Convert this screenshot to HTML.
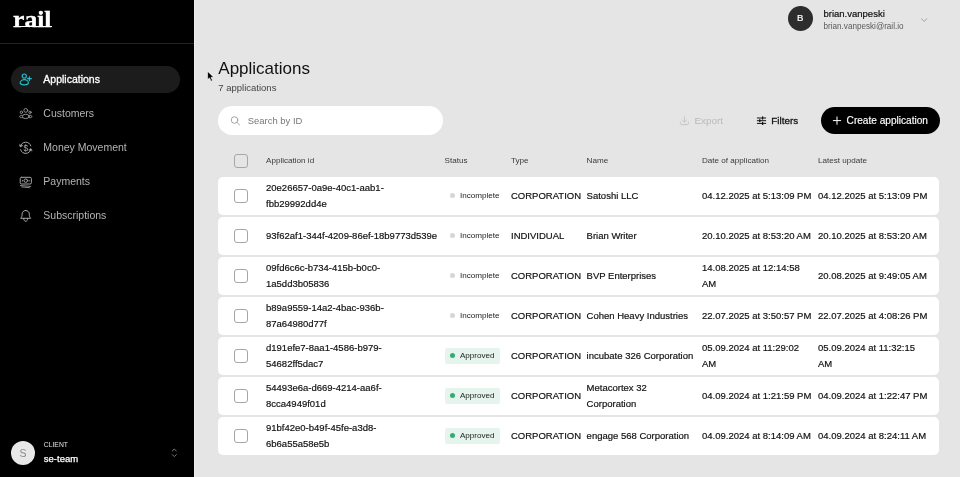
<!DOCTYPE html>
<html><head><meta charset="utf-8">
<style>
*{box-sizing:border-box;margin:0;padding:0}
html,body{width:960px;height:477px;overflow:hidden}
body{font-family:"Liberation Sans",sans-serif;background:#e6e5e5;color:#111;position:relative}
.side{position:absolute;left:0;top:0;width:194px;height:477px;background:#000}
.logo{position:absolute;left:13.3px;top:4.6px;font-family:"Liberation Serif",serif;font-weight:bold;font-size:24px;color:#fff;letter-spacing:0px;line-height:28px;transform:scaleX(1.07);transform-origin:0 0;-webkit-text-stroke:0.35px #fff}
.logo-u{position:absolute;left:13.6px;top:26px;width:38.5px;height:1.3px;background:#fff}
.sedge{position:absolute;left:194px;top:0;width:1px;height:477px;background:#eeeded}
.sdiv{position:absolute;left:0;top:43px;width:194px;height:1px;background:#232323}
.nav{position:absolute;left:11px;width:169px;height:26.6px;border-radius:13.3px;color:#b4b4b4;font-size:10.5px;line-height:26.6px;padding-left:32.3px;white-space:nowrap}
.nav.act{background:#1c1c1c;color:#fff;-webkit-text-stroke:0.3px #fff}
.cl-av{position:absolute;left:10.7px;top:440.7px;width:24.6px;height:24.6px;border-radius:50%;background:#e8e8e8;color:#8a8a8a;font-size:10.5px;line-height:24.6px;text-align:center}
.cl-l{position:absolute;left:43.8px;top:440px;font-size:6.8px;line-height:9px;color:#e0e0e0}
.cl-n{position:absolute;left:43.8px;top:452.5px;font-size:9.5px;line-height:12px;color:#fff;-webkit-text-stroke:0.25px #fff}
.u-av{position:absolute;left:787.8px;top:6.3px;width:24.8px;height:24.8px;border-radius:50%;background:#2d2d2d;color:#fff;font-size:9.6px;line-height:24.8px;text-align:center;-webkit-text-stroke:0.2px #fff}
.u-n{position:absolute;left:823.5px;top:8px;font-size:9.5px;line-height:12px;color:#111;-webkit-text-stroke:0.2px #111}
.u-e{position:absolute;left:823.5px;top:21.4px;font-size:8.15px;line-height:11px;color:#5a5a5a}
h1{position:absolute;left:218.3px;top:59px;font-size:17px;line-height:20px;font-weight:normal;color:#111}
.sub{position:absolute;left:218.3px;top:81.5px;font-size:9.5px;line-height:12px;color:#444}
.search{position:absolute;left:218px;top:106px;width:225.4px;height:28.5px;border-radius:14.25px;background:#fff;font-size:9.45px;color:#777;line-height:29.7px;padding-left:29.8px}
.btn{position:absolute;top:106.5px;height:27.5px;line-height:27.5px;font-size:9.9px;white-space:nowrap}
.create{left:820.6px;width:119px;border-radius:13.75px;background:#000;color:#fff;padding-left:26px;font-size:10.1px;-webkit-text-stroke:0.15px #fff}
.th{position:absolute;top:155px;font-size:8.1px;line-height:11px;color:#3a3a3a;white-space:nowrap}
.cb{position:absolute;left:233.5px;width:14.2px;height:14.4px;border:1px solid #a6a6a6;border-radius:3px;background:#fff}
.row{position:absolute;left:218px;width:721.4px;height:38.3px;background:#fff;border-radius:5px;font-size:9.5px;color:#111}
.row div{position:absolute}
.row .c{-webkit-text-stroke:0.18px #111;top:50%;transform:translateY(-50%);line-height:16.3px;font-size:9.5px;white-space:nowrap}
.bd{top:11px;height:15.8px;width:54.5px;border-radius:2px;font-size:8.1px;line-height:15.8px;padding-left:14.6px;color:#222;white-space:nowrap}
.bd i{position:absolute;left:4.7px;top:5.2px;width:5.4px;height:5.4px;border-radius:50%}
.bd.ap{background:#e5f5ee}.bd.ap i{background:#2fae70}
.bd.in i{background:#d6d6d6}
#wrap{position:absolute;left:0;top:0;width:960px;height:477px;will-change:transform;transform:translateZ(0)}
.ov{position:absolute;left:0;top:0;width:960px;height:477px;pointer-events:none}
</style></head><body>
<div id="wrap">
<div class="side">
<div class="logo">rail</div><div class="logo-u"></div>
<div class="sdiv"></div>
<div class="nav act" style="top:66px">Applications</div>
<div class="nav" style="top:100px">Customers</div>
<div class="nav" style="top:134px">Money Movement</div>
<div class="nav" style="top:168px">Payments</div>
<div class="nav" style="top:202px">Subscriptions</div>
<div class="cl-av">S</div><div class="cl-l">CLIENT</div><div class="cl-n">se-team</div>
</div>
<div class="sedge"></div>
<div class="u-av">B</div><div class="u-n">brian.vanpeski</div><div class="u-e">brian.vanpeski@rail.io</div>
<h1>Applications</h1>
<div class="sub">7 applications</div>
<div class="search">Search by ID</div>
<div class="btn" style="left:694.5px;color:#b9b9b9">Export</div>
<div class="btn" style="left:771.3px;color:#111;-webkit-text-stroke:0.3px #111">Filters</div>
<div class="btn create">Create application</div>
<div class="cb" style="top:154px;background:transparent"></div>
<div class="th" style="left:266px">Application id</div>
<div class="th" style="left:444.6px">Status</div>
<div class="th" style="left:511px">Type</div>
<div class="th" style="left:586.6px">Name</div>
<div class="th" style="left:702px">Date of application</div>
<div class="th" style="left:818px">Latest update</div>
<div class="row" style="top:176.60px">
<span class="cb" style="left:15.5px;top:12px"></span>
<div class="c" style="left:48px">20e26657-0a9e-40c1-aab1-<br>fbb29992dd4e</div>
<div class="bd in" style="left:227.3px"><i></i>Incomplete</div>
<div class="c" style="left:293px">CORPORATION</div>
<div class="c" style="left:368.6px">Satoshi LLC</div>
<div class="c" style="left:484px">04.12.2025 at 5:13:09 PM</div>
<div class="c" style="left:600px">04.12.2025 at 5:13:09 PM</div>
</div>
<div class="row" style="top:216.63px">
<span class="cb" style="left:15.5px;top:12px"></span>
<div class="c" style="left:48px">93f62af1-344f-4209-86ef-18b9773d539e</div>
<div class="bd in" style="left:227.3px"><i></i>Incomplete</div>
<div class="c" style="left:293px">INDIVIDUAL</div>
<div class="c" style="left:368.6px">Brian Writer</div>
<div class="c" style="left:484px">20.10.2025 at 8:53:20 AM</div>
<div class="c" style="left:600px">20.10.2025 at 8:53:20 AM</div>
</div>
<div class="row" style="top:256.66px">
<span class="cb" style="left:15.5px;top:12px"></span>
<div class="c" style="left:48px">09fd6c6c-b734-415b-b0c0-<br>1a5dd3b05836</div>
<div class="bd in" style="left:227.3px"><i></i>Incomplete</div>
<div class="c" style="left:293px">CORPORATION</div>
<div class="c" style="left:368.6px">BVP Enterprises</div>
<div class="c" style="left:484px">14.08.2025 at 12:14:58<br>AM</div>
<div class="c" style="left:600px">20.08.2025 at 9:49:05 AM</div>
</div>
<div class="row" style="top:296.69px">
<span class="cb" style="left:15.5px;top:12px"></span>
<div class="c" style="left:48px">b89a9559-14a2-4bac-936b-<br>87a64980d77f</div>
<div class="bd in" style="left:227.3px"><i></i>Incomplete</div>
<div class="c" style="left:293px">CORPORATION</div>
<div class="c" style="left:368.6px">Cohen Heavy Industries</div>
<div class="c" style="left:484px">22.07.2025 at 3:50:57 PM</div>
<div class="c" style="left:600px">22.07.2025 at 4:08:26 PM</div>
</div>
<div class="row" style="top:336.72px">
<span class="cb" style="left:15.5px;top:12px"></span>
<div class="c" style="left:48px">d191efe7-8aa1-4586-b979-<br>54682ff5dac7</div>
<div class="bd ap" style="left:227.3px"><i></i>Approved</div>
<div class="c" style="left:293px">CORPORATION</div>
<div class="c" style="left:368.6px">incubate 326 Corporation</div>
<div class="c" style="left:484px">05.09.2024 at 11:29:02<br>AM</div>
<div class="c" style="left:600px">05.09.2024 at 11:32:15<br>AM</div>
</div>
<div class="row" style="top:376.75px">
<span class="cb" style="left:15.5px;top:12px"></span>
<div class="c" style="left:48px">54493e6a-d669-4214-aa6f-<br>8cca4949f01d</div>
<div class="bd ap" style="left:227.3px"><i></i>Approved</div>
<div class="c" style="left:293px">CORPORATION</div>
<div class="c" style="left:368.6px">Metacortex 32<br>Corporation</div>
<div class="c" style="left:484px">04.09.2024 at 1:21:59 PM</div>
<div class="c" style="left:600px">04.09.2024 at 1:22:47 PM</div>
</div>
<div class="row" style="top:416.78px">
<span class="cb" style="left:15.5px;top:12px"></span>
<div class="c" style="left:48px">91bf42e0-b49f-45fe-a3d8-<br>6b6a55a58e5b</div>
<div class="bd ap" style="left:227.3px"><i></i>Approved</div>
<div class="c" style="left:293px">CORPORATION</div>
<div class="c" style="left:368.6px">engage 568 Corporation</div>
<div class="c" style="left:484px">04.09.2024 at 8:14:09 AM</div>
<div class="c" style="left:600px">04.09.2024 at 8:24:11 AM</div>
</div>
<svg class="ov" viewBox="0 0 960 477" fill="none" stroke-linecap="round" stroke-linejoin="round">
<!-- applications icon -->
<g stroke="#1dbcc8" stroke-width="1.2">
<circle cx="24.3" cy="76.1" r="2.1"/>
<path d="M20.2 82.8c0-1.6 1.8-3.2 4.1-3.2s4.1 1.6 4.1 3.2c0 1.3-1.8 2-4.1 2s-4.1-.7-4.1-2z"/>
<path d="M29.4 76.8v3.8M27.5 78.7h3.8" stroke-width="1.3"/>
</g>
<!-- customers icon -->
<g stroke="#9c9c9c" stroke-width="0.9">
<circle cx="25.8" cy="110.4" r="1.9"/>
<circle cx="21.4" cy="112.3" r="1.2"/>
<circle cx="30" cy="112.3" r="1.2"/>
<ellipse cx="25.8" cy="116.4" rx="3.3" ry="2.2"/>
<path d="M22.3 115.3c-1.6-.3-2.6.3-2.6 1.2s1 1.4 2.6 1.2M29.3 115.3c1.6-.3 2.6.3 2.6 1.2s-1 1.4-2.6 1.2"/>
</g>
<!-- money movement icon -->
<g stroke="#a5a8a8" stroke-width="1">
<path d="M20.6 146.3a5.3 5.3 0 0 1 10.2-.4"/>
<path d="M30.8 149.3a5.3 5.3 0 0 1-10.2.4"/>
<path d="M19.4 145l1.1 2 1.9-1.2z" fill="#a5a8a8" stroke-width=".6"/>
<path d="M32 150.6l-1.1-2-1.9 1.2z" fill="#a5a8a8" stroke-width=".6"/>
<text x="25.75" y="150.7" font-size="8.2" text-anchor="middle" fill="#b0b3b3" stroke="none" font-family="Liberation Sans, sans-serif">$</text>
</g>
<!-- payments icon -->
<g stroke="#ababab" stroke-width="0.95">
<rect x="20.2" y="177.3" width="11.2" height="6.7" rx="1.3"/>
<circle cx="25.75" cy="180.65" r="1.75"/>
<path d="M22.4 180.3v.8M29.1 180.3v.8"/>
<path d="M20.4 185.5l10.3.9M21.6 186.9l7.9.8" stroke-width=".8"/>
</g>
<!-- bell -->
<g stroke="#b0b0b0" stroke-width="0.95">
<path d="M25.7 210.5c-2.100 0-3.600 1.500-3.600 3.600 0 2.400-.5 3.200-1.400 4.200h10c-.9-1-1.400-1.800-1.400-4.200 0-2.100-1.500-3.600-3.600-3.600z"/>
<path d="M23.700 218.500c0 1.700.9 2.800 2 2.800s2-1.100 2-2.800"/>
</g>
<!-- client updown chevron -->
<g stroke="#8a8a8a" stroke-width="0.9">
<path d="M172.300 451l2-2 2 2M172.300 454.600l2 2 2-2"/>
</g>
<!-- user chevron -->
<path d="M921.500 18.800l2.700 2.600 2.700-2.600" stroke="#9a9a9a" stroke-width="0.9"/>
<!-- search -->
<g stroke="#9a9a9a" stroke-width="0.9">
<circle cx="234.500" cy="120" r="3.300"/><path d="M237 122.500l2.500 2.300"/>
</g>
<!-- export -->
<g stroke="#c2c2c2" stroke-width="0.9">
<path d="M684.400 116.800v5.200M682.200 120l2.200 2.200 2.200-2.200M680.400 122v1.600c0 .6.400 1 1 1h6c.6 0 1-.4 1-1V122"/>
</g>
<!-- filters -->
<g stroke="#111" stroke-width="1">
<path d="M757.300 118h8.400M757.300 120.700h8.400M757.300 123.400h8.400"/>
<path d="M762.600 117v2M759.800 119.700v2M762.600 122.400v2" stroke-width="1.300"/>
</g>
<!-- plus -->
<path d="M837 116.900v7.400M833.300 120.600h7.400" stroke="#fff" stroke-width="1"/>
<!-- cursor -->
<path d="M207.6 71.500v8.100l1.900-1.700 1.500 3.300 1.500-.7-1.500-3.200 2.500-.1z" fill="#000" stroke="#fff" stroke-width=".6" stroke-linejoin="miter"/>
</svg>
</div>
</body></html>
